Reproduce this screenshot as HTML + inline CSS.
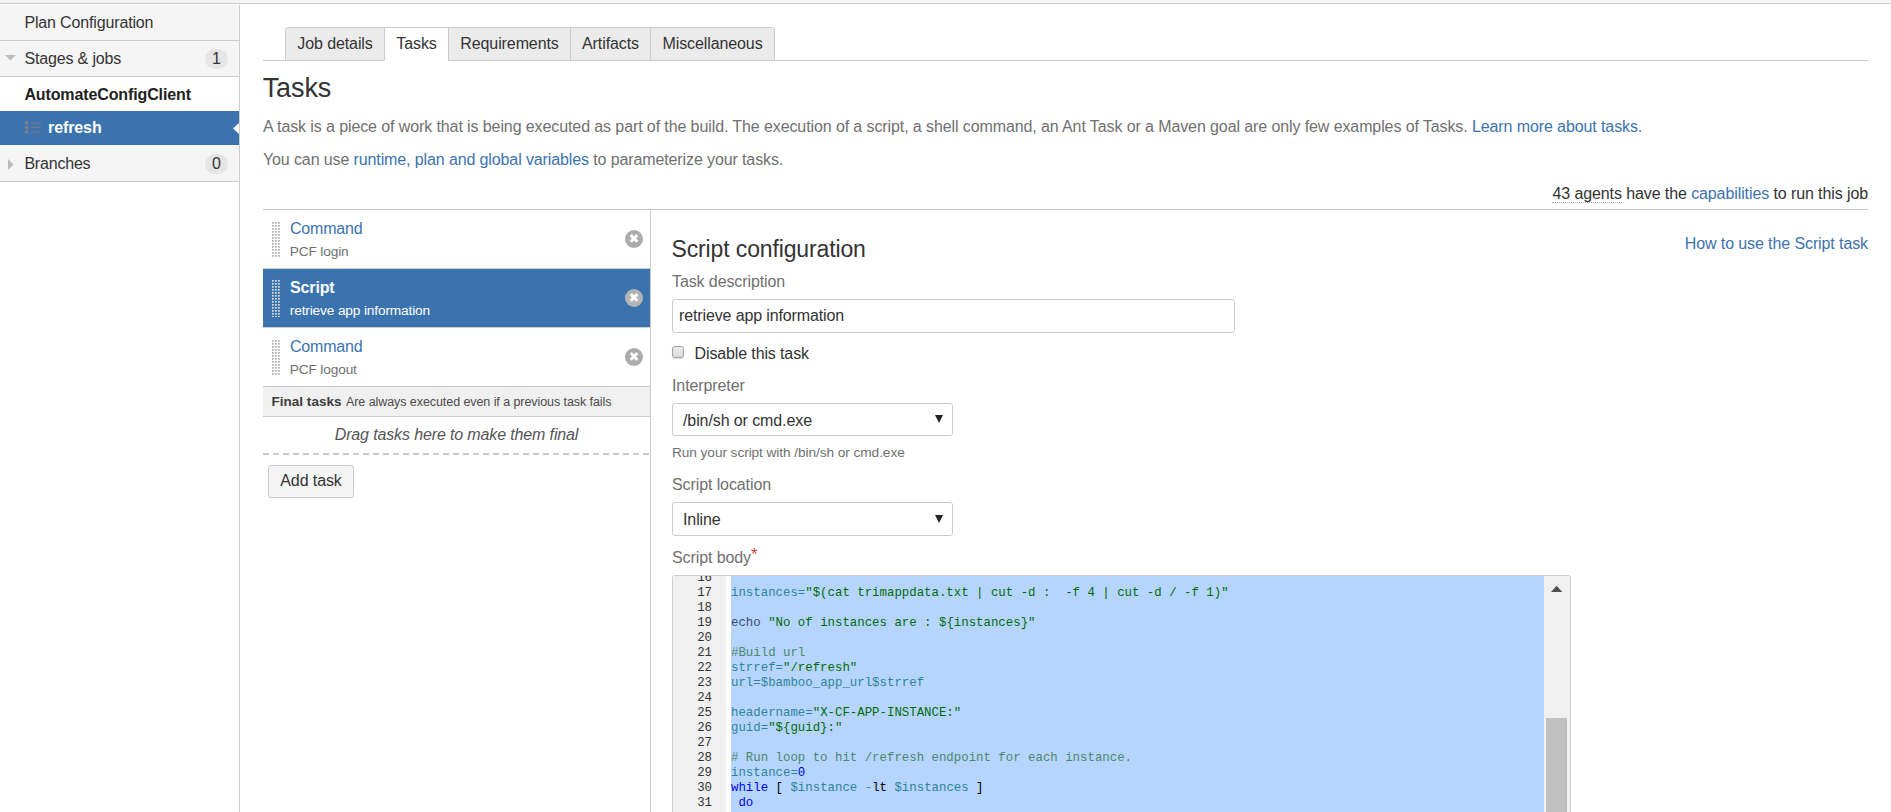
<!DOCTYPE html>
<html lang="en">
<head>
<meta charset="utf-8">
<title>Tasks - Bamboo</title>
<style>
*{box-sizing:border-box;}
html,body{margin:0;padding:0;}
body{width:1891px;height:812px;overflow:hidden;background:#fff;font-family:"Liberation Sans",Arial,sans-serif;font-size:16px;letter-spacing:-0.1px;color:#333;position:relative;}
a{color:#3b73af;text-decoration:none;}
.abs{position:absolute;}
#topband{left:0;top:0;width:1891px;height:3px;background:#f5f5f5;}
#topline{left:0;top:3px;width:1890px;height:1px;background:#cccccc;}
#rightband{left:1890px;top:0;width:1px;height:812px;background:#f5f5f5;}
/* sidebar */
#sidebar{left:0;top:5px;width:240px;height:807px;border-right:1px solid #ccc;background:#fff;}
.srow{position:absolute;left:0;width:239px;background:#f5f5f5;border-bottom:1px solid #ccc;font-size:16px;color:#333;white-space:nowrap;}
.srow .t{position:absolute;left:24px;}
.badge{position:absolute;left:205px;width:23px;height:20px;border-radius:10px;background:#e5e5e5;color:#333;font-size:16px;text-align:center;line-height:20px;}
/* tabs */
#tabline{left:263px;top:60px;width:1605px;height:1px;background:#ccc;}
.tab{position:absolute;top:27px;height:34px;background:#ebebeb;border:1px solid #ccc;font-size:16px;line-height:31px;color:#333;text-align:center;white-space:nowrap;}
.tab.active{background:#fff;border-bottom-color:#fff;}
h1{position:absolute;margin:0;left:262.7px;top:71px;font-size:27px;line-height:34px;font-weight:normal;color:#333;}
.p{position:absolute;left:263px;font-size:16px;line-height:20px;color:#707070;white-space:nowrap;}
/* task list */
.task{position:absolute;left:263px;width:387px;height:59px;border-bottom:1px solid #ccc;background:#fff;}
.task .n{position:absolute;left:27px;top:9px;font-size:16px;letter-spacing:-0.2px;line-height:20px;color:#3b73af;white-space:nowrap;}
.task .d{position:absolute;left:26.8px;top:33px;font-size:13.7px;letter-spacing:-0.15px;line-height:18px;color:#707070;white-space:nowrap;}
.task.sel{background:#3b73af;}
.task.sel .n{color:#fff;font-weight:bold;letter-spacing:-0.13px;}
.task.sel .d{color:#fff;}
.grip{position:absolute;left:9.4px;top:12.3px;width:9px;height:35px;}
.task.sel .grip{top:10.9px;height:37px;}
.del{position:absolute;left:362px;top:20px;width:18px;height:18px;}
label.l{position:absolute;left:672px;font-size:16px;line-height:20px;color:#707070;white-space:nowrap;}
.sel-box{position:absolute;left:672px;width:281px;height:33px;border:1px solid #ccc;border-radius:3px;background:#fff;font-size:16px;line-height:33px;color:#333;padding-left:10px;}
.sel-box:after{content:"";position:absolute;left:262px;top:11px;border-left:4px solid transparent;border-right:4px solid transparent;border-top:8.5px solid #222;}
.sel-box.s2:after{top:12px;}
/* code */
#code{left:672px;top:575px;width:899px;height:240px;border:1px solid #ccc;border-radius:3px;overflow:hidden;background:#fff;}
#gutter{left:0;top:0;width:53px;height:240px;background:#f0f0f0;}
#selbg{left:58px;top:0;width:813px;height:240px;background:#b5d5ff;}
#sbar{left:871px;top:0;width:26px;height:240px;background:#f1f1f1;}
#thumb{left:873px;top:142px;width:21px;height:100px;background:#c1c1c1;}
.ln,.cl{position:absolute;font-family:"Liberation Mono","DejaVu Sans Mono",monospace;font-size:12.38px;letter-spacing:0;line-height:15px;height:15px;white-space:pre;}
.ln{left:0;width:39px;text-align:right;color:#333;}
.cl{left:58px;color:#000;}
.s{color:#036a07;} .c{color:#4c886b;} .k{color:#0000ff;} .v{color:#318495;} .num{color:#0000cd;} .id{color:#318495;} .f{color:#3c4c72;} .o{color:#687687;}
</style>
</head>
<body>
<div class="abs" id="topband"></div>
<div class="abs" id="topline"></div>
<div class="abs" id="rightband"></div>

<div class="abs" id="sidebar">
  <div class="srow" style="top:0;height:36px;"><span class="t" style="top:9px;left:24.4px;letter-spacing:-0.15px;">Plan Configuration</span></div>
  <div class="srow" style="top:36px;height:36px;">
    <svg class="abs" style="left:5px;top:14px" width="12" height="6" viewBox="0 0 12 6"><path d="M0 0h11L5.5 5.5z" fill="#bbb"/></svg>
    <span class="t" style="top:9px;left:24.4px;letter-spacing:-0.15px;">Stages &amp; jobs</span><span class="badge" style="top:8px;">1</span></div>
  <div class="abs" style="left:24.4px;top:81px;letter-spacing:-0.12px;font-weight:bold;font-size:16px;color:#222;white-space:nowrap;">AutomateConfigClient</div>
  <div class="abs" style="left:0;top:106px;width:239px;height:34px;background:#3b73af;">
    <svg class="abs" style="left:25px;top:10px" width="17" height="14" viewBox="0 0 17 14"><g fill="#857f7a"><rect x="0" y="0.3" width="3.2" height="3"/><rect x="0" y="4.9" width="3.2" height="3"/><rect x="0" y="9.4" width="3.2" height="3"/></g><g fill="#6b7a8d"><rect x="6.1" y="1.2" width="9.8" height="1.4"/><rect x="6.1" y="5.7" width="9.8" height="1.4"/><rect x="6.1" y="10.2" width="9.8" height="1.4"/></g></svg>
    <span class="abs" style="left:48px;top:8px;font-weight:bold;color:#fff;font-size:16px;">refresh</span>
    <svg class="abs" style="left:233px;top:12px" width="6" height="11" viewBox="0 0 6 11"><path d="M6 0L0 5.5l6 5.5z" fill="#fff"/></svg>
  </div>
  <div class="srow" style="top:140px;height:37px;">
    <svg class="abs" style="left:8px;top:14px" width="6" height="12" viewBox="0 0 6 12"><path d="M0 0v11L5.5 5.5z" fill="#bbb"/></svg>
    <span class="t" style="top:10px;left:24.4px;letter-spacing:-0.2px;">Branches</span><span class="badge" style="top:9px;">0</span></div>
</div>

<div class="abs" id="tabline"></div>
<div class="tab" style="left:285px;width:100px;border-radius:3px 0 0 0;">Job details</div>
<div class="tab active" style="left:384px;width:65px;">Tasks</div>
<div class="tab" style="left:448px;width:123px;">Requirements</div>
<div class="tab" style="left:570px;width:81px;">Artifacts</div>
<div class="tab" style="left:650px;width:125px;border-radius:0 3px 0 0;">Miscellaneous</div>

<h1>Tasks</h1>
<div class="p" style="top:117px;">A task is a piece of work that is being executed as part of the build. The execution of a script, a shell command, an Ant Task or a Maven goal are only few examples of Tasks. <a>Learn more about tasks.</a></div>
<div class="p" style="top:150px;letter-spacing:-0.115px;">You can use <a>runtime, plan and global variables</a> to parameterize your tasks.</div>
<div class="abs" style="right:23px;top:184px;font-size:16px;line-height:20px;color:#333;white-space:nowrap;"><span style="border-bottom:1px dotted #aaa;">43 agents</span> have the <a>capabilities</a> to run this job</div>
<div class="abs" style="left:263px;top:209px;width:1605px;height:1px;background:#ccc;"></div>
<div class="abs" style="left:650px;top:210px;width:1px;height:602px;background:#ccc;"></div>

<!-- tasks -->
<div class="task" style="top:210px;"><svg class="grip"><use href="#g"/></svg><span class="n">Command</span><span class="d">PCF login</span><svg class="del" viewBox="0 0 18 18"><use href="#x"/></svg></div>
<div class="task sel" style="top:269px;"><svg class="grip"><use href="#g2"/></svg><span class="n">Script</span><span class="d">retrieve app information</span><svg class="del" viewBox="0 0 18 18"><use href="#x2"/></svg></div>
<div class="task" style="top:328px;"><svg class="grip"><use href="#g"/></svg><span class="n">Command</span><span class="d">PCF logout</span><svg class="del" viewBox="0 0 18 18"><use href="#x"/></svg></div>
<svg width="0" height="0" style="position:absolute">
  <defs>
    <pattern id="dots" width="3" height="3" patternUnits="userSpaceOnUse"><rect width="1.7" height="1.7" fill="#adadad"/></pattern>
    <pattern id="dots2" width="3" height="3" patternUnits="userSpaceOnUse"><rect width="1.7" height="1.7" fill="#dcdcdc"/></pattern>
    <g id="g"><rect width="9" height="35" fill="url(#dots)"/></g>
    <g id="g2"><rect width="9" height="37" fill="url(#dots2)"/></g>
    <g id="x"><circle cx="9" cy="9" r="9" fill="#acacac"/><path d="M5.7 5.1l6.6 6.6M12.3 5.1l-6.6 6.6" stroke="#fff" stroke-width="2.9" stroke-linecap="butt"/></g>
    <g id="x2"><circle cx="9" cy="9" r="9" fill="#b4b4b4"/><path d="M5.7 5.1l6.6 6.6M12.3 5.1l-6.6 6.6" stroke="#fff" stroke-width="2.9" stroke-linecap="butt"/></g>
  </defs>
</svg>
<div class="abs" style="left:263px;top:387px;width:387px;height:30px;background:#f0f0f0;border-bottom:1px solid #ccc;white-space:nowrap;"><span class="abs" style="left:8.5px;top:6px;font-size:13.5px;letter-spacing:0.02px;font-weight:bold;color:#3c3c3c;line-height:18px;">Final tasks</span><span class="abs" style="left:83px;top:7px;font-size:12.5px;letter-spacing:-0.07px;color:#4a4a4a;line-height:16px;">Are always executed even if a previous task fails</span></div>
<div class="abs" style="left:263px;top:425px;width:387px;text-align:center;font-style:italic;letter-spacing:-0.135px;font-size:16px;line-height:20px;color:#555;">Drag tasks here to make them final</div>
<div class="abs" style="left:263px;top:453px;width:387px;height:2px;background:repeating-linear-gradient(90deg,#ccc 0,#ccc 6px,transparent 6px,transparent 10px);"></div>
<div class="abs" style="left:268px;top:465px;width:86px;height:33px;border:1px solid #ccc;border-radius:3px;background:#f5f5f5;font-size:16px;line-height:30px;text-align:center;color:#333;">Add task</div>

<!-- config -->
<div class="abs" style="left:671.5px;top:234px;font-size:23px;letter-spacing:-0.13px;line-height:30px;color:#333;white-space:nowrap;">Script configuration</div>
<div class="abs" style="right:23px;top:234px;font-size:16px;line-height:20px;white-space:nowrap;"><a>How to use the Script task</a></div>
<label class="l" style="top:272px;">Task description</label>
<div class="abs" style="left:672px;top:299px;width:563px;height:34px;border:1px solid #ccc;border-radius:3px;font-size:16px;line-height:32px;padding-left:6px;letter-spacing:-0.13px;color:#333;">retrieve app information</div>
<div class="abs" style="left:672px;top:346px;width:12px;height:12px;border:1px solid #a3a3a3;border-radius:3px;background:linear-gradient(#ececec,#dcdcdc);box-shadow:0 1px 1px rgba(0,0,0,.15);"></div>
<div class="abs" style="left:694.6px;top:344px;font-size:16px;letter-spacing:-0.13px;line-height:20px;color:#333;">Disable this task</div>
<label class="l" style="top:376px;">Interpreter</label>
<div class="sel-box" style="top:403px;">/bin/sh or cmd.exe</div>
<div class="abs" style="left:672px;top:444px;font-size:13.7px;letter-spacing:-0.08px;line-height:18px;color:#707070;">Run your script with /bin/sh or cmd.exe</div>
<label class="l" style="top:475px;">Script location</label>
<div class="sel-box s2" style="top:502px;height:34px;line-height:34px;">Inline</div>
<label class="l" style="top:548px;">Script body<span style="color:#d04437;font-size:17px;line-height:10px;position:relative;top:-3px;left:0px;">*</span></label>

<div class="abs" id="code">
  <div class="abs" id="gutter"></div>
  <div class="abs" id="selbg"></div>
  <div class="abs" id="sbar"></div>
  <svg class="abs" style="left:877px;top:9px" width="13" height="8" viewBox="0 0 13 8"><path d="M1 7L6.65 0.7L12.3 7z" fill="#505050"/></svg>
  <div class="abs" id="thumb"></div>
  <div class="ln" style="top:-5px">16</div>
  <div class="ln" style="top:10px">17</div><div class="cl" style="top:10px"><span class="id">instances=</span><span class="s">"$(cat trimappdata.txt | cut -d :  -f 4 | cut -d / -f 1)"</span></div>
  <div class="ln" style="top:25px">18</div>
  <div class="ln" style="top:40px">19</div><div class="cl" style="top:40px"><span class="f">echo</span> <span class="s">"No of instances are : ${instances}"</span></div>
  <div class="ln" style="top:55px">20</div>
  <div class="ln" style="top:70px">21</div><div class="cl" style="top:70px"><span class="c">#Build url</span></div>
  <div class="ln" style="top:85px">22</div><div class="cl" style="top:85px"><span class="id">strref=</span><span class="s">"/refresh"</span></div>
  <div class="ln" style="top:100px">23</div><div class="cl" style="top:100px"><span class="id">url=</span><span class="v">$bamboo_app_url$strref</span></div>
  <div class="ln" style="top:115px">24</div>
  <div class="ln" style="top:130px">25</div><div class="cl" style="top:130px"><span class="id">headername=</span><span class="s">"X-CF-APP-INSTANCE:"</span></div>
  <div class="ln" style="top:145px">26</div><div class="cl" style="top:145px"><span class="id">guid=</span><span class="s">"${guid}:"</span></div>
  <div class="ln" style="top:160px">27</div>
  <div class="ln" style="top:175px">28</div><div class="cl" style="top:175px"><span class="c"># Run loop to hit /refresh endpoint for each instance.</span></div>
  <div class="ln" style="top:190px">29</div><div class="cl" style="top:190px"><span class="id">instance=</span><span class="num">0</span></div>
  <div class="ln" style="top:205px">30</div><div class="cl" style="top:205px"><span class="k">while</span> [ <span class="v">$instance</span> <span class="o">-</span>lt <span class="v">$instances</span> ]</div>
  <div class="ln" style="top:220px">31</div><div class="cl" style="top:220px"> <span class="k">do</span></div>
  <div class="ln" style="top:235px">32</div><div class="cl" style="top:235px">   <span class="f">echo</span> <span class="s">"instance : ${instance}"</span></div>
</div>
</body>
</html>
